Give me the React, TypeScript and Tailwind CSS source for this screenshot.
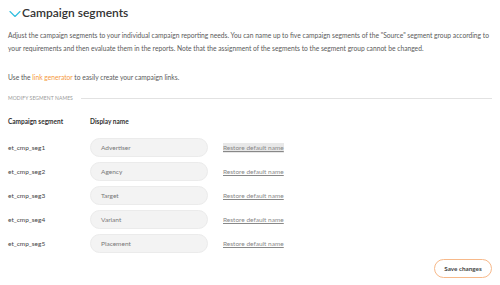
import { ChevronDown } from 'lucide-react';

const segments = [
  { key: 'et_cmp_seg1', name: 'Advertiser' },
  { key: 'et_cmp_seg2', name: 'Agency' },
  { key: 'et_cmp_seg3', name: 'Target' },
  { key: 'et_cmp_seg4', name: 'Variant' },
  { key: 'et_cmp_seg5', name: 'Placement' },
];

export default function App() {
  return (
    <div className="w-[500px] h-[285px] bg-white text-[#4a4a4a] px-2 overflow-hidden" style={{ fontFamily: 'Lato, "Open Sans", sans-serif' }}>
      <div className="flex items-center h-[24px] pt-[2px]">
        <ChevronDown size={20} strokeWidth={1.4} className="text-[#33bfdf] -ml-[3px] -mr-[3px] mt-[1px]" />
        <h1 className="text-[12px] font-semibold text-[#333] leading-none">Campaign segments</h1>
      </div>

      <p className="text-[6.7px] leading-[13px] mt-[5px] text-[#5a5a5a]">
        Adjust the campaign segments to your individual campaign reporting needs. You can name up to five campaign segments of the "Source" segment group according to your requirements and then evaluate them in the reports. Note that the assignment of the segments to the segment group cannot be changed.
      </p>

      <p className="text-[6.7px] leading-[13px] mt-[16px] text-[#5a5a5a]">
        Use the <span className="text-[#f5993d]">link generator</span> to easily create your campaign links.
      </p>

      <div className="flex items-center gap-[8px] mt-[11px]">
        <span className="text-[5px] uppercase text-[#999] tracking-[0.02em]">Modify segment names</span>
        <div className="flex-1 h-px bg-[#e2e2e2]" />
      </div>

      <div className="flex items-center mt-[14px] text-[6.5px] font-bold text-[#333]">
        <span className="w-[82px]">Campaign segment</span>
        <span>Display name</span>
      </div>

      <div className="flex flex-col gap-[5px] mt-[12px]">
        {segments.map((s, i) => (
          <div key={s.key} className="flex items-center text-[6.5px]">
            <span className="w-[82px] text-[#444]">{s.key}</span>
            <div className="w-[118px] h-[19px] rounded-full bg-[#f3f3f3] border border-[#ebebeb] flex items-center pl-[10px] text-[#777]">
              {s.name}
            </div>
            <span className={`ml-[15px] underline text-[#888] ${i === 0 ? 'bg-[#e8e8e8]' : ''}`}>Restore default name</span>
          </div>
        ))}
      </div>

      <div className="flex justify-end mt-[6px]">
        <button className="w-[58px] h-[19px] rounded-full border border-[#f7b98a] text-[6.3px] font-bold text-[#444]">Save changes</button>
      </div>
    </div>
  );
}
